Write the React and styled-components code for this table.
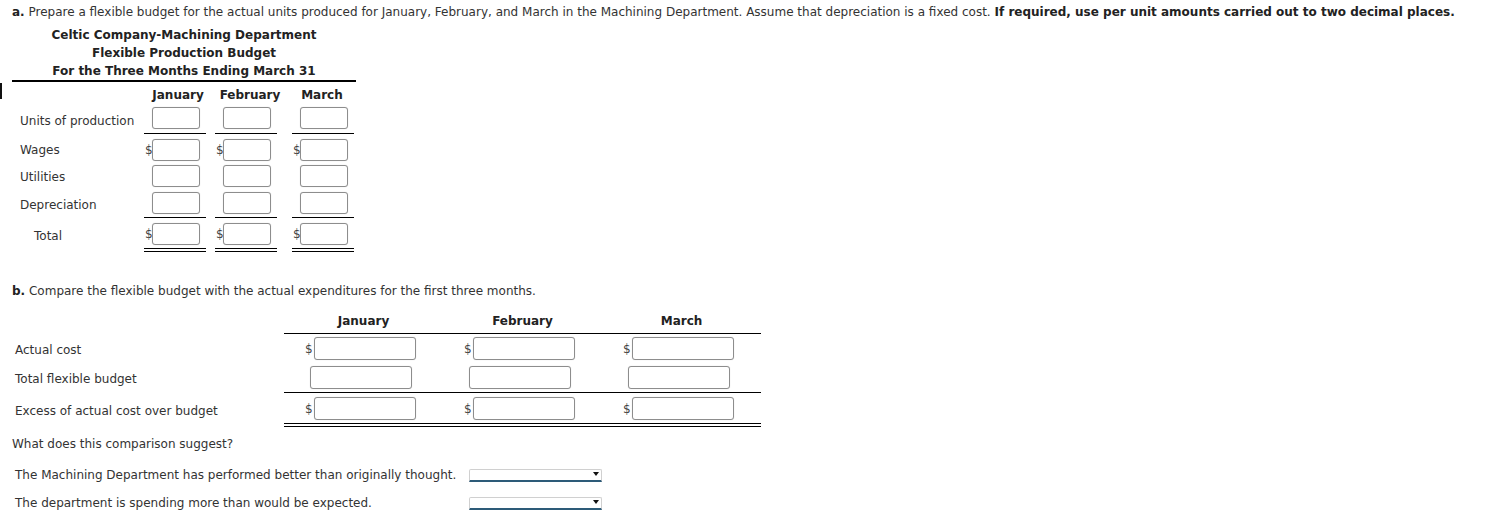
import styled, { createGlobalStyle } from "styled-components";

const GlobalStyle = createGlobalStyle`
  body {
    margin: 0;
    background: #fff;
    color: #333;
    font-family: "DejaVu Sans", Verdana, sans-serif;
    font-size: 12px;
  }
`;

const Page = styled.div`
  position: relative;
  padding: 3px 0 0 12px;
  line-height: 18px;
`;

const EdgeMark = styled.div`
  position: absolute;
  left: 0;
  top: 83px;
  width: 2px;
  height: 16px;
  background: #111;
`;

const Prompt = styled.p`
  margin: 0;
  white-space: nowrap;
`;

const Strong = styled.b`
  color: #222;
`;

/* ---------- part a ---------- */

const SectionA = styled.section`
  width: 344px;
  margin-top: 5px;
`;

const Title = styled.div`
  text-align: center;
  font-weight: bold;
  color: #222;
  border-bottom: 2px solid #000;
`;

const HeadRow = styled.div`
  display: flex;
  height: 23px;
  align-items: center;
  padding-left: ${(p) => p.$indent}px;
  font-weight: bold;
  color: #222;
`;

const HeadCell = styled.div`
  width: ${(p) => p.$w}px;
  padding-top: 2px;
  text-align: center;
`;

const BudgetRow = styled.div`
  display: flex;
  align-items: stretch;
`;

const RowLabel = styled.div`
  box-sizing: border-box;
  width: ${(p) => p.$w}px;
  padding-left: ${(p) => p.$indent}px;
  padding-top: 2px;
  display: flex;
  align-items: center;
  white-space: nowrap;
`;

const lines = {
  none: "0",
  single: "1px solid #000",
  double: "4px double #000",
};

const BudgetCell = styled.div`
  width: 62px;
  margin-left: ${(p) => p.$gap}px;
  display: flex;
  align-items: center;
  padding: ${(p) => p.$pt}px 0 ${(p) => p.$pb}px;
  border-bottom: ${(p) => lines[p.$line]};
`;

const Dollar = styled.span`
  width: ${(p) => p.$w}px;
  margin-left: ${(p) => p.$ml}px;
  font-size: 12px;
  line-height: 14px;
  color: #444;
`;

const Field = styled.input`
  box-sizing: border-box;
  width: ${(p) => p.$w}px;
  height: ${(p) => p.$h}px;
  margin: 0 0 0 ${(p) => p.$ml || 0}px;
  padding: 0 4px;
  border: 1px solid #8d8d8d;
  border-radius: 3px;
  background: #fff;
  box-shadow: 0 0 1px rgba(0, 0, 0, 0.2);
  font: inherit;
`;

/* ---------- part b ---------- */

const SectionB = styled.section`
  margin-top: 30px;
`;

const CompareHead = styled.div`
  display: flex;
  margin-top: 11px;
  padding-left: 272px;
  font-weight: bold;
  color: #222;
`;

const CompareHeadCell = styled.div`
  width: 159px;
  text-align: center;
  padding: 1px 0 3px;
  border-bottom: 1px solid #000;
`;

const CompareRow = styled.div`
  display: flex;
  align-items: stretch;
`;

const CompareCell = styled.div`
  box-sizing: border-box;
  width: 159px;
  padding: ${(p) => p.$pt}px 0 ${(p) => p.$pb}px 21px;
  display: flex;
  align-items: center;
  border-bottom: ${(p) => lines[p.$line]};
`;

const Question = styled.p`
  margin: 8px 0 0;
`;

const AnswerList = styled.div`
  margin-top: 8px;
  padding-left: 3px;
`;

const AnswerRow = styled.div`
  display: flex;
  align-items: center;
  height: 28px;
`;

const AnswerText = styled.span`
  width: 454px;
  white-space: nowrap;
`;

const Dropdown = styled.div`
  position: relative;
  box-sizing: border-box;
  width: 133px;
  height: 13px;
  margin-top: 1px;
  border: 1px solid #d0d0d0;
  border-bottom: 2px solid #2d5b78;
  border-radius: 2px 2px 0 0;
  &::after {
    content: "";
    position: absolute;
    right: 2px;
    top: 2px;
    border-left: 3px solid transparent;
    border-right: 3px solid transparent;
    border-top: 4px solid #111;
  }
`;

const budgetRows = [
  { label: "Units of production", dollar: false, pt: 2, pb: 4, line: "single" },
  { label: "Wages", dollar: true, pt: 5, pb: 2, line: "none" },
  { label: "Utilities", dollar: false, pt: 2, pb: 2, line: "none" },
  { label: "Depreciation", dollar: false, pt: 3, pb: 3, line: "single" },
  { label: "Total", dollar: true, pt: 5, pb: 3, line: "double", indent: 22 },
];

const budgetGaps = [0, 9, 15];

const compareRows = [
  { label: "Actual cost", dollar: true, pt: 3, pb: 3, line: "none" },
  { label: "Total flexible budget", dollar: false, pt: 3, pb: 3, line: "single" },
  { label: "Excess of actual cost over budget", dollar: true, pt: 4, pb: 3, line: "double" },
];

const months = ["January", "February", "March"];

const answers = [
  "The Machining Department has performed better than originally thought.",
  "The department is spending more than would be expected.",
];

export default function App() {
  return (
    <Page>
      <GlobalStyle />
      <EdgeMark />
      <Prompt>
        <Strong>a.</Strong> Prepare a flexible budget for the actual units
        produced for January, February, and March in the Machining Department.
        Assume that depreciation is a fixed cost.{" "}
        <Strong>
          If required, use per unit amounts carried out to two decimal places.
        </Strong>
      </Prompt>

      <SectionA>
        <Title>
          <div>Celtic Company-Machining Department</div>
          <div>Flexible Production Budget</div>
          <div>For the Three Months Ending March 31</div>
        </Title>
        <HeadRow $indent={132}>
          <HeadCell $w={70}>January</HeadCell>
          <HeadCell $w={78}>February</HeadCell>
          <HeadCell $w={70}>March</HeadCell>
        </HeadRow>
        {budgetRows.map((row) => (
          <BudgetRow key={row.label}>
            <RowLabel $w={132} $indent={row.indent || 8}>
              {row.label}
            </RowLabel>
            {budgetGaps.map((gap, i) => (
              <BudgetCell
                key={i}
                $gap={gap}
                $pt={row.pt}
                $pb={row.pb}
                $line={row.line}
              >
                <Dollar $w={7} $ml={1}>
                  {row.dollar ? "$" : ""}
                </Dollar>
                <Field $w={48} $h={22} aria-label={`${row.label} ${months[i]}`} />
              </BudgetCell>
            ))}
          </BudgetRow>
        ))}
      </SectionA>

      <SectionB>
        <Prompt>
          <Strong>b.</Strong> Compare the flexible budget with the actual
          expenditures for the first three months.
        </Prompt>
        <CompareHead>
          {months.map((m) => (
            <CompareHeadCell key={m}>{m}</CompareHeadCell>
          ))}
        </CompareHead>
        {compareRows.map((row) => (
          <CompareRow key={row.label}>
            <RowLabel $w={272} $indent={3}>
              {row.label}
            </RowLabel>
            {months.map((m) => (
              <CompareCell key={m} $pt={row.pt} $pb={row.pb} $line={row.line}>
                {row.dollar && (
                  <Dollar $w={9} $ml={0}>
                    $
                  </Dollar>
                )}
                <Field
                  $w={102}
                  $h={23}
                  $ml={row.dollar ? 0 : 5}
                  aria-label={`${row.label} ${m}`}
                />
              </CompareCell>
            ))}
          </CompareRow>
        ))}
        <Question>What does this comparison suggest?</Question>
        <AnswerList>
          {answers.map((a) => (
            <AnswerRow key={a}>
              <AnswerText>{a}</AnswerText>
              <Dropdown />
            </AnswerRow>
          ))}
        </AnswerList>
      </SectionB>
    </Page>
  );
}
